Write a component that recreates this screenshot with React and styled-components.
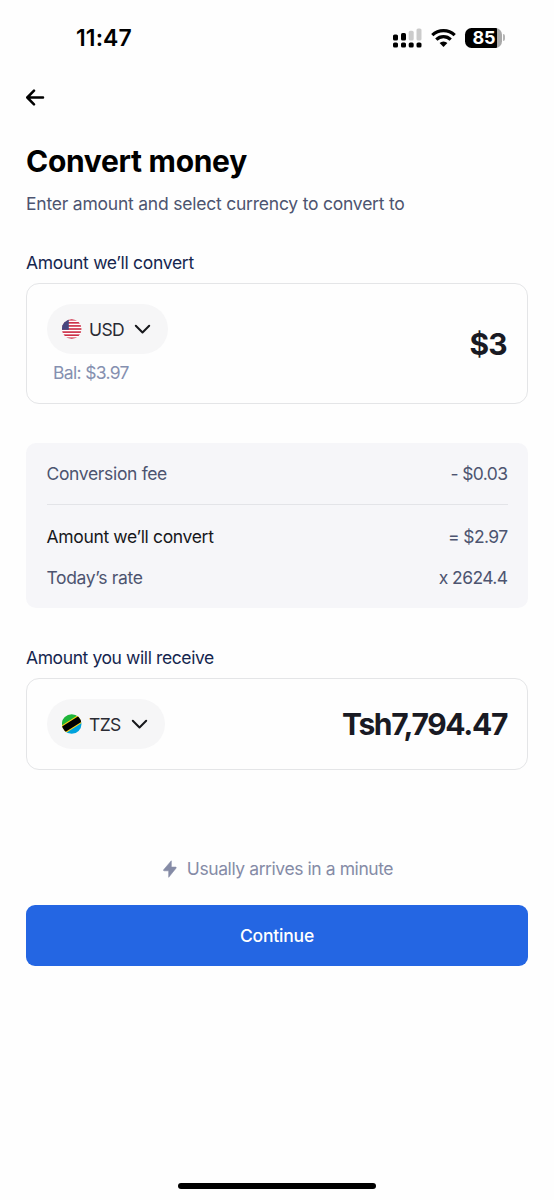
import React from "react";
import styled, { createGlobalStyle } from "styled-components";

const GlobalStyle = createGlobalStyle`
  * {
    box-sizing: border-box;
  }

  body {
    margin: 0;
    background: #fefefe;
    font-family: Inter, "Liberation Sans", sans-serif;
    -webkit-font-smoothing: antialiased;
  }
`;

/* Screen */
const Screen = styled.div`
  display: flex;
  flex-direction: column;
  width: 554px;
  height: 1200px;
  overflow: hidden;
`;

const Content = styled.main`
  display: flex;
  flex: 1;
  flex-direction: column;
  padding: 0 26px;
`;

/* Status bar */
const StatusBar = styled.header`
  display: flex;
  align-items: center;
  justify-content: space-between;
  height: 75px;
  padding: 0 49px 0 76px;
`;

const Time = styled.span`
  font-size: 23px;
  font-weight: 600;
  letter-spacing: 0.1px;
  line-height: 28px;
  color: #000;
`;

const StatusIcons = styled.div`
  display: flex;
  align-items: center;
  gap: 9px;
`;

const Battery = styled.div`
  display: flex;
  align-items: center;
  gap: 1px;
`;

const BatteryBody = styled.div`
  width: 37px;
  height: 20px;
  padding-left: 1px;
  border-radius: 6.5px;
  background: linear-gradient(to right, #000 31.5px, #a9a9a9 31.5px);
  font-size: 18px;
  font-weight: 700;
  line-height: 20px;
  text-align: center;
  color: #fff;
`;

const BatteryCap = styled.span`
  width: 2px;
  height: 7px;
  border-radius: 0 3px 3px 0;
  background: #b5b5b5;
`;

/* Heading */
const BackButton = styled.button`
  display: flex;
  align-items: center;
  width: 20px;
  height: 45px;
  padding: 0;
  border: 0;
  background: none;
`;

const Title = styled.h1`
  margin: 22px 0 0;
  font-size: 30px;
  font-weight: 700;
  letter-spacing: -0.3px;
  line-height: 38px;
  color: #000;
`;

const Subtitle = styled.p`
  margin: 12px 0 0;
  font-size: 17.5px;
  letter-spacing: -0.22px;
  line-height: 24px;
  color: #4d5470;
`;

const Label = styled.label`
  display: block;
  margin-top: ${(props) => props.$top}px;
  font-size: 17.5px;
  letter-spacing: ${(props) => props.$spacing}px;
  line-height: 24px;
  color: #15264f;
`;

/* Amount card */
const Card = styled.section`
  display: flex;
  align-items: center;
  justify-content: space-between;
  height: ${(props) => props.$height}px;
  margin-top: 8px;
  padding: 0 20px;
  border: 1px solid #e4e5e7;
  border-radius: 13px;
`;

const CurrencyPill = styled.button`
  display: flex;
  align-items: center;
  width: ${(props) => props.$width}px;
  height: 50px;
  padding: 0 0 0 15px;
  border: 0;
  border-radius: 25px;
  background: #f6f6f7;
  font-family: inherit;
  font-size: 17.5px;
  letter-spacing: -0.6px;
  color: #2a2b33;

  span {
    margin: 0 10px 0 7px;
  }
`;

const Balance = styled.div`
  margin: 7px 0 -2px 6px;
  font-size: 17.5px;
  letter-spacing: -0.67px;
  line-height: 24px;
  color: #8590b0;
`;

const Amount = styled.div`
  font-size: 30px;
  font-weight: 700;
  letter-spacing: ${(props) => props.$spacing}px;
  line-height: 38px;
  color: #191a23;
`;

/* Summary */
const Summary = styled.section`
  height: 165px;
  margin-top: 39px;
  padding: 0 20.5px;
  border-radius: 10px;
  background: #f6f6f9;
`;

const SummaryRow = styled.div`
  display: flex;
  align-items: center;
  justify-content: space-between;
  height: 41px;
  font-size: 17.5px;
  letter-spacing: -0.34px;
  color: #4d5470;
`;

const FeeRow = styled(SummaryRow)`
  height: 62px;
  margin-bottom: 11px;
  border-bottom: 1px solid #e3e4e8;
`;

const Strong = styled.span`
  color: #17181c;
`;

const Value = styled.span`
  letter-spacing: -0.6px;
`;

/* Footer */
const Arrival = styled.div`
  display: flex;
  align-items: center;
  justify-content: center;
  gap: 10px;
  margin-top: 87px;
  padding-left: 2px;
  font-size: 17.5px;
  letter-spacing: -0.42px;
  line-height: 24px;
  color: #858ba6;
`;

const ContinueButton = styled.button`
  height: 61px;
  margin-top: 24px;
  border: 0;
  border-radius: 9px;
  background: #2466e3;
  font-family: inherit;
  font-size: 17.5px;
  font-weight: 500;
  letter-spacing: -0.2px;
  color: #fff;
`;

const HomeIndicator = styled.div`
  width: 198px;
  height: 6px;
  margin: 0 auto 11px;
  border-radius: 3px;
  background: #000;
`;

/* Icons */
const SignalIcon = () => (
  <svg width="29" height="20" viewBox="0 0 29 20">
    <g fill="#000">
      <rect x="0" y="6.5" width="5" height="6" rx="1.6" />
      <rect x="8" y="5" width="5" height="7.5" rx="1.6" />
      <rect x="0" y="14.5" width="5" height="5" rx="1.6" />
      <rect x="8" y="14.5" width="5" height="5" rx="1.6" />
      <rect x="15.7" y="14.5" width="5" height="5" rx="1.6" />
      <rect x="23.5" y="14.5" width="5" height="5" rx="1.6" />
    </g>
    <g fill="#cbcbcb">
      <rect x="15.7" y="2.8" width="5" height="9.7" rx="1.6" />
      <rect x="23.5" y="0.5" width="5" height="12" rx="1.6" />
    </g>
  </svg>
);

const WifiIcon = () => (
  <svg width="25" height="18" viewBox="0 0 25 18">
    <g fill="none" stroke="#000" strokeWidth="3.2">
      <path d="M1.3 6.2a16 16 0 0 1 22.4 0" />
      <path d="M5.3 10.6a10.2 10.2 0 0 1 14.4 0" />
    </g>
    <path d="M12.5 17.9 8.6 14a5.5 5.5 0 0 1 7.8 0z" fill="#000" />
  </svg>
);

const BackIcon = () => (
  <svg width="19" height="17" viewBox="0 0 19 17">
    <path
      d="M17 8.5H1.6M8 1.7 1.3 8.5 8 15.3"
      fill="none"
      stroke="#000"
      strokeWidth="2.5"
      strokeLinecap="round"
      strokeLinejoin="round"
    />
  </svg>
);

const ChevronIcon = () => (
  <svg width="17" height="11" viewBox="0 0 17 11">
    <path
      d="M1.8 1.8 8.5 8.5l6.7-6.7"
      fill="none"
      stroke="#17181c"
      strokeWidth="2"
      strokeLinecap="round"
      strokeLinejoin="round"
    />
  </svg>
);

const BoltIcon = () => (
  <svg width="14" height="18" viewBox="0 0 14 18">
    <path
      d="M8.3.8v6.3h4.2a.7.7 0 0 1 .5 1.1L5.7 17.3V10.8H1.2a.7.7 0 0 1-.5-1.1z"
      fill="#858ba6"
      stroke="#858ba6"
      strokeWidth="0.6"
      strokeLinejoin="round"
    />
  </svg>
);

const UsFlag = () => (
  <svg width="20" height="20" viewBox="0 0 20 20">
    <clipPath id="us">
      <circle cx="9.7" cy="10" r="9.8" />
    </clipPath>
    <g clipPath="url(#us)">
      <rect width="20" height="20" fill="#fff" />
      {[0, 1, 2, 3, 4, 5, 6].map((i) => (
        <rect key={i} y={i * 3.08} width="20" height="1.54" fill="#c9203a" />
      ))}
      <rect width="6.8" height="10.8" fill="#46467f" />
    </g>
  </svg>
);

const TzFlag = () => (
  <svg width="20" height="20" viewBox="0 0 20 20">
    <clipPath id="tz">
      <circle cx="9.7" cy="10" r="9.8" />
    </clipPath>
    <g clipPath="url(#tz)">
      <path d="M0 0h20L0 14z" fill="#1eb53a" />
      <path d="M20 5v15H0z" fill="#00a3dd" />
      <path d="M-2 17.6 22 2.4" stroke="#fcd116" strokeWidth="8.6" />
      <path d="M-2 17.6 22 2.4" stroke="#000" strokeWidth="6.4" />
    </g>
  </svg>
);

const App = () => {
  return (
    <Screen>
      <GlobalStyle />
      <StatusBar>
        <Time>11:47</Time>
        <StatusIcons>
          <SignalIcon />
          <WifiIcon />
          <Battery>
            <BatteryBody>85</BatteryBody>
            <BatteryCap />
          </Battery>
        </StatusIcons>
      </StatusBar>

      <Content>
        <BackButton aria-label="Back">
          <BackIcon />
        </BackButton>
        <Title>Convert money</Title>
        <Subtitle>Enter amount and select currency to convert to</Subtitle>

        <Label $top={35} $spacing={-0.3}>
          Amount we’ll convert
        </Label>
        <Card $height={121}>
          <div>
            <CurrencyPill $width={121}>
              <UsFlag />
              <span>USD</span>
              <ChevronIcon />
            </CurrencyPill>
            <Balance>Bal: $3.97</Balance>
          </div>
          <Amount $spacing={-0.7}>$3</Amount>
        </Card>

        <Summary>
          <FeeRow>
            <span>Conversion fee</span>
            <Value>- $0.03</Value>
          </FeeRow>
          <SummaryRow>
            <Strong>Amount we’ll convert</Strong>
            <Value>= $2.97</Value>
          </SummaryRow>
          <SummaryRow>
            <span>Today’s rate</span>
            <Value>x 2624.4</Value>
          </SummaryRow>
        </Summary>

        <Label $top={38} $spacing={-0.4}>
          Amount you will receive
        </Label>
        <Card $height={92}>
          <CurrencyPill $width={118}>
            <TzFlag />
            <span>TZS</span>
            <ChevronIcon />
          </CurrencyPill>
          <Amount $spacing={-1.35}>Tsh7,794.47</Amount>
        </Card>

        <Arrival>
          <BoltIcon />
          Usually arrives in a minute
        </Arrival>
        <ContinueButton>Continue</ContinueButton>
      </Content>
      <HomeIndicator />
    </Screen>
  );
};

export default App;
